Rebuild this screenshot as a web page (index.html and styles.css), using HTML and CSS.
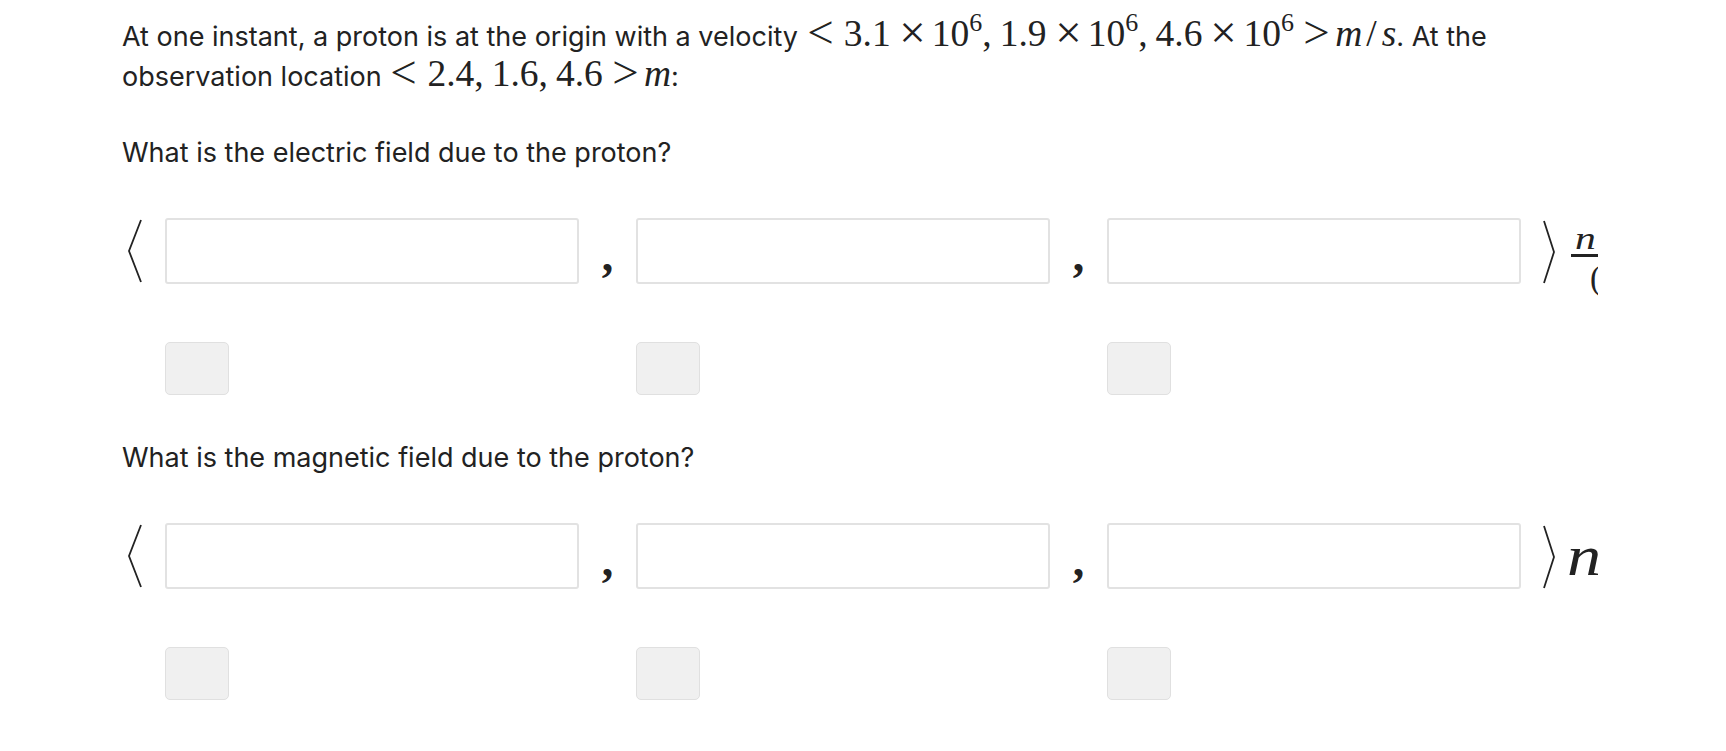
FILE: index.html
```html
<!DOCTYPE html>
<html>
<head>
<meta charset="utf-8">
<link rel="stylesheet" href="styles.css">
</head>
<body>
<div class="page">
  <p class="intro">At one instant, a proton is at the origin with a velocity <span class="m"><span class="rel r1">&lt;</span>3.1<span class="bin">×</span>10<sup>6</sup>,<span class="th"></span>1.9<span class="bin">×</span>10<sup>6</sup>,<span class="th"></span>4.6<span class="bin">×</span>10<sup>6</sup><span class="rel r2">&gt;</span><i>m</i><span class="sl">/</span><i>s</i></span>. At the <span class="w">observation location</span> <span class="m"><span class="rel r1">&lt;</span>2.4,<span class="th"></span>1.6,<span class="th"></span>4.6<span class="rel r3">&gt;</span><i>m</i></span>:</p>

  <p class="question">What is the electric field due to the proton?</p>
  <div class="vec">
    <svg class="lbr" viewBox="0 0 16 66" width="16" height="66"><polyline points="15,2 3,33 15,64" fill="none" stroke="#222" stroke-width="1.8"/></svg>
    <div class="cell"><div class="box"></div><div class="chip"></div></div>
    <span class="comma">,</span>
    <div class="cell"><div class="box"></div><div class="chip"></div></div>
    <span class="comma">,</span>
    <div class="cell"><div class="box"></div><div class="chip"></div></div>
    <div class="tail">
      <svg class="rbr" viewBox="0 0 14 66" width="14" height="66"><polyline points="2,3 12,34 2,65" fill="none" stroke="#222" stroke-width="1.8"/></svg>
      <span class="frac"><span class="num"><i>n</i></span><span class="den">(C)</span></span>
    </div>
  </div>

  <p class="question q2">What is the magnetic field due to the proton?</p>
  <div class="vec">
    <svg class="lbr" viewBox="0 0 16 66" width="16" height="66"><polyline points="15,2 3,33 15,64" fill="none" stroke="#222" stroke-width="1.8"/></svg>
    <div class="cell"><div class="box"></div><div class="chip"></div></div>
    <span class="comma">,</span>
    <div class="cell"><div class="box"></div><div class="chip"></div></div>
    <span class="comma">,</span>
    <div class="cell"><div class="box"></div><div class="chip"></div></div>
    <div class="tail">
      <svg class="rbr" viewBox="0 0 14 66" width="14" height="66"><polyline points="2,3 12,34 2,65" fill="none" stroke="#222" stroke-width="1.8"/></svg>
      <span class="unit"><i>n</i></span>
    </div>
  </div>
</div>
</body>
</html>
```
FILE: styles.css
```css
html, body {
  margin: 0;
  padding: 0;
  background: #fff;
}
.page {
  width: 1476px;
  height: 751px;
  padding: 17px 0 0 122px;
  box-sizing: content-box;
  overflow: hidden;
  font-family: Inter, "Noto Sans", sans-serif;
  color: #222;
  font-size: 27px;
  line-height: 40px;
}
p { margin: 0; }
.m {
  font-family: "Liberation Serif", "DejaVu Serif", serif;
  font-size: 37.5px;
  line-height: 34px;
}
.m i { font-style: italic; }
.m sup {
  font-size: 26px;
  line-height: 0;
  vertical-align: 15px;
}
.rel, .bin {
  display: inline-block;
  line-height: 20px;
  transform: scale(1.25);
  transform-origin: 50% 66%;
}
.rel.r1 { margin: 0 13px 0 4px; }
.rel.r2 { margin: 0 8px 0 12px; }
.rel.r3 { margin: 0 8px 0 12px; }
.bin { margin: 0 9px 0 11px; }
.sl { margin: 0 5px 0 4px; }
.th { display: inline-block; width: 8px; }
.question { margin-top: 36px; }
.q2 { margin-top: 43px; }
.vec {
  display: flex;
  align-items: flex-start;
  margin-top: 45px;
}
.lbr { margin: 0 23px 0 4px; flex: none; }
.cell {
  display: flex;
  flex-direction: column;
  gap: 58px;
  flex: none;
}
.box {
  width: 410px;
  height: 62px;
  border: 2px solid #e2e2e2;
  border-radius: 3px;
  background: #fff;
}
.chip {
  width: 62px;
  height: 51px;
  border: 1px solid #e0e0e0;
  border-radius: 5px;
  background: #f0f0f0;
}
.comma {
  flex: none;
  width: 57px;
  text-align: center;
  font-family: "Liberation Serif", "DejaVu Serif", serif;
  font-weight: bold;
  font-size: 46px;
  line-height: 46px;
  padding-top: 15px;
}
.tail {
  display: flex;
  align-items: center;
  height: 66px;
  margin-left: 21px;
  white-space: nowrap;
}
.rbr { flex: none; }
.frac {
  display: flex;
  flex-direction: column;
  width: 80px;
  margin: 8px 0 0 15px;
  font-family: "Liberation Serif", "DejaVu Serif", serif;
  font-size: 32px;
  line-height: 30px;
}
.num {
  height: 30px;
  padding: 0 0 0 4px;
  border-bottom: 3px solid #222;
  line-height: 28px;
}
.num i {
  display: inline-block;
  transform: scaleX(1.3);
  transform-origin: left center;
}
.den {
  height: 30px;
  padding: 6px 0 0 19px;
  box-sizing: border-box;
  line-height: 30px;
  font-size: 33px;
}
.unit {
  margin-left: 11px;
  font-family: "Liberation Serif", "DejaVu Serif", serif;
  font-size: 56px;
  line-height: 66px;
}
.unit i {
  display: inline-block;
  transform: scaleX(1.22);
  transform-origin: left center;
}
```
